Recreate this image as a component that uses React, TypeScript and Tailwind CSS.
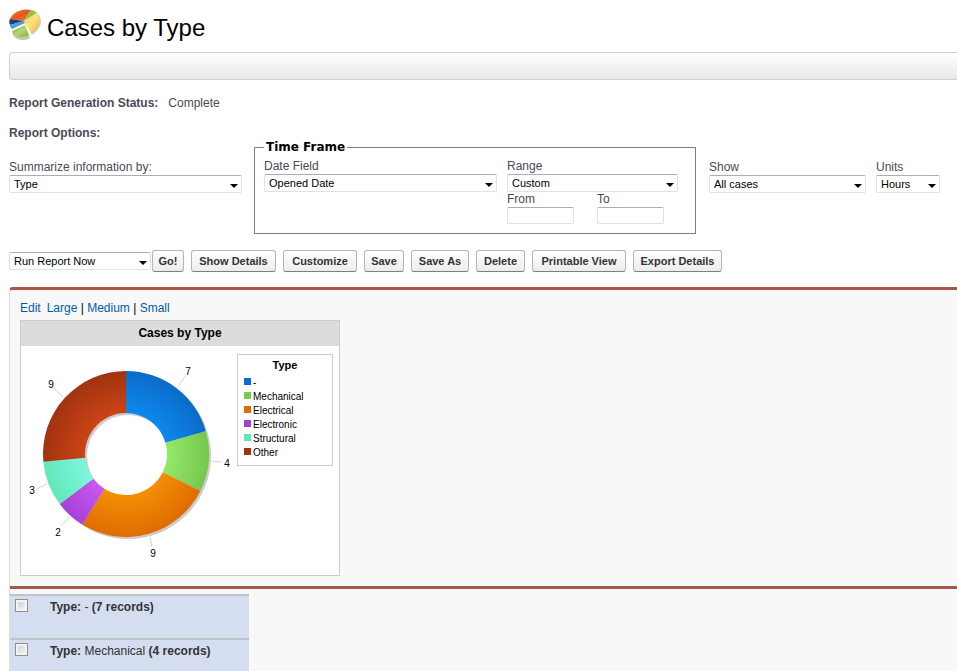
import { useId } from 'react';
import type { ReactNode } from 'react';

const slices = [
  { label: '-', value: 7, inner: '#0d8bf0', outer: '#0b6bc9', text: [167, 29], line: [157, 41, 164, 30] },
  { label: 'Mechanical', value: 4, inner: '#98ec6c', outer: '#77c74f', text: [206, 121], line: [189, 115, 201, 116] },
  { label: 'Electrical', value: 9, inner: '#f59207', outer: '#e06c00', text: [132, 211], line: [129, 191, 131, 201] },
  { label: 'Electronic', value: 2, inner: '#cf58f2', outer: '#a542da', text: [37, 190], line: [49, 171, 40, 180] },
  { label: 'Structural', value: 3, inner: '#7ff7e2', outer: '#62e8b8', text: [11, 148], line: [26, 138, 15, 143] },
  { label: 'Other', value: 9, inner: '#cf4516', outer: '#a13310', text: [30, 42], line: [42, 51, 33, 42] },
];

const CX = 105;
const CY = 108;
const OUTER = 83;
const INNER = 41;

const total = slices.reduce((sum, s) => sum + s.value, 0);

const point = (r: number, turn: number) => {
  const a = turn * Math.PI * 2;
  return `${(CX + r * Math.sin(a)).toFixed(2)} ${(CY - r * Math.cos(a)).toFixed(2)}`;
};

const slicePath = (index: number) => {
  const before = slices.slice(0, index).reduce((sum, s) => sum + s.value, 0);
  const from = before / total;
  const to = (before + slices[index].value) / total;
  return `M${point(OUTER, from)}A${OUTER} ${OUTER} 0 0 1 ${point(OUTER, to)}L${point(INNER, to)}A${INNER} ${INNER} 0 0 0 ${point(INNER, from)}Z`;
};

const ReportIcon = () => (
  <svg width="34" height="34" viewBox="0 0 34 34" aria-hidden="true">
    <defs>
      <linearGradient id="icon-orange" x1="0" y1="0" x2="1" y2="1">
        <stop offset="0" stopColor="#f4863f" />
        <stop offset="0.5" stopColor="#e2571c" />
        <stop offset="1" stopColor="#f08a4e" />
      </linearGradient>
      <linearGradient id="icon-yellow" x1="0" y1="0" x2="1" y2="1">
        <stop offset="0" stopColor="#ffd84a" />
        <stop offset="0.5" stopColor="#fbe27a" />
        <stop offset="1" stopColor="#eeb422" />
      </linearGradient>
      <linearGradient id="icon-green" x1="0" y1="0" x2="1" y2="1">
        <stop offset="0" stopColor="#74ab31" />
        <stop offset="0.5" stopColor="#b5d670" />
        <stop offset="1" stopColor="#7fb23a" />
      </linearGradient>
    </defs>
    <path d="M28 5C34 10 34 20 23 27L21 24C29 19 31 12 28 5Z" fill="#cfccbf" />
    <path d="M3 25C5 32 15 34 21 30L20 27C14 30 8 29 3 25Z" fill="#c2c6b2" />
    <path d="M15 13L1 11C4 4 13 0 22 2Z" fill="url(#icon-orange)" />
    <path d="M15 13L22 2C24 2 26 3 28 5Z" fill="#93c34c" />
    <path d="M15 13L28 5C32 10 32 18 22 25Z" fill="url(#icon-yellow)" />
    <path d="M15 13L1 11C0 13 0 15 1 17Z" fill="#1c3f86" />
    <path d="M15 13L1 17C1 19 2 20 3 21L16 15Z" fill="#4a9fd8" />
    <path d="M16 17L3 23C4 29 13 31 20 27Z" fill="url(#icon-green)" />
  </svg>
);

type SelectProps = { label?: string; ariaLabel?: string; value: string; width: string };

const SelectBox = ({ label, ariaLabel, value, width }: SelectProps) => {
  const id = useId();
  return (
    <div className={width}>
      {label && (
        <label htmlFor={id} className="block text-[12px] leading-[15px] text-[#4a4a56]">
          {label}
        </label>
      )}
      <div className="relative">
        <select
          id={id}
          aria-label={ariaLabel}
          className="block h-[18px] w-full appearance-none rounded-[2px] border border-[#dfe1e9] border-t-[#abadb3] bg-white px-1 text-[11px] leading-4 text-black"
        >
          <option>{value}</option>
        </select>
        <svg className="pointer-events-none absolute right-1 top-2" width="8" height="5" viewBox="0 0 8 5" aria-hidden="true">
          <path d="M0 1H8L4 5Z" fill="#000" />
        </svg>
      </div>
    </div>
  );
};

const DateInput = ({ label }: { label: string }) => {
  const id = useId();
  return (
    <div className="w-[67px]">
      <label htmlFor={id} className="block text-[12px] leading-[15px] text-[#4a4a56]">
        {label}
      </label>
      <input
        id={id}
        type="text"
        className="block h-[17px] w-full rounded-[2px] border border-[#dfe1e9] border-t-[#abadb3] bg-white px-1 text-[11px]"
      />
    </div>
  );
};

const Button = ({ children, width }: { children: ReactNode; width: string }) => (
  <button
    type="button"
    className={`h-[22px] rounded-[3px] border border-[#b5b5b5] border-b-[#7f7f7f] bg-linear-to-b from-white to-[#ececec] text-center text-[11px] font-bold whitespace-nowrap text-[#333] ${width}`}
  >
    {children}
  </button>
);

const DonutChart = () => (
  <svg width="216" height="229" viewBox="0 0 216 229" role="img" aria-label="Cases by Type">
    <defs>
      {slices.map((s, i) => (
        <radialGradient key={s.label} id={`slice-${i}`} gradientUnits="userSpaceOnUse" cx={CX} cy={CY} r={OUTER}>
          <stop offset="0.45" stopColor={s.inner} />
          <stop offset="1" stopColor={s.outer} />
        </radialGradient>
      ))}
    </defs>
    <circle cx={CX + 2} cy={CY + 2} r="62" fill="none" stroke="#ccc" strokeWidth="42" />
    {slices.map((s, i) => (
      <g key={s.label}>
        <path d={slicePath(i)} fill={`url(#slice-${i})`} />
        <line x1={s.line[0]} y1={s.line[1]} x2={s.line[2]} y2={s.line[3]} stroke="#d5d5d5" />
        <text x={s.text[0]} y={s.text[1]} textAnchor="middle" fontSize="10" fill="#000">
          {s.value}
        </text>
      </g>
    ))}
  </svg>
);

const swatches = ['bg-[#0b6bd0]', 'bg-[#78c950]', 'bg-[#e06c00]', 'bg-[#a63fda]', 'bg-[#64e8ba]', 'bg-[#a13310]'];

const ChartLegend = () => (
  <div className="mt-2 h-28 w-24 border border-[#ccc] pt-1">
    <h3 className="text-center text-[11px] leading-3 font-bold text-black">Type</h3>
    <ul className="mt-1 pl-1.5">
      {slices.map((s, i) => (
        <li key={s.label} className="flex h-3.5 items-start gap-0.5 text-[10px] leading-4 text-black">
          <span className={`mt-[3px] size-[7px] ${swatches[i]}`} />
          {s.label}
        </li>
      ))}
    </ul>
  </div>
);

const groups = [
  { name: '-', count: 7 },
  { name: 'Mechanical', count: 4 },
];

export default function App() {
  return (
    <div className="min-h-screen bg-white pl-[9px] font-['Liberation_Sans',Arial,sans-serif] text-[12px] text-[#4a4a56]">
      <header className="flex h-[52px] items-start gap-1 pt-2">
        <ReportIcon />
        <h1 className="pt-1 text-[24px] leading-8 text-black">Cases by Type</h1>
      </header>

      <div className="h-7 rounded-l-[4px] border border-r-0 border-[#d0d0d0] bg-linear-to-b from-white to-[#e8e8e8]" />

      <p className="mt-[15px] flex gap-2.5 leading-4">
        <strong>Report Generation Status:</strong>
        <span>Complete</span>
      </p>
      <h2 className="mt-3.5 leading-4 font-bold">Report Options:</h2>

      <div className="flex items-start">
        <div className="mt-[19px]">
          <SelectBox label="Summarize information by:" value="Type" width="w-[233px]" />
        </div>
        <fieldset className="ml-3 h-[93px] w-[442px] border border-[#7d7d82] px-[9px]">
          <legend className="px-0.5 font-['DejaVu_Sans',Verdana,sans-serif] text-[12px] leading-3 font-bold text-black">Time Frame</legend>
          <div className="mt-1.5 flex gap-2.5">
            <SelectBox label="Date Field" value="Opened Date" width="w-[233px]" />
            <div>
              <SelectBox label="Range" value="Custom" width="w-[171px]" />
              <div className="flex gap-[23px]">
                <DateInput label="From" />
                <DateInput label="To" />
              </div>
            </div>
          </div>
        </fieldset>
        <div className="mt-[19px] ml-[13px] flex gap-2.5">
          <SelectBox label="Show" value="All cases" width="w-[157px]" />
          <SelectBox label="Units" value="Hours" width="w-16" />
        </div>
      </div>

      <div className="mt-4 flex items-center">
        <SelectBox ariaLabel="Report action" value="Run Report Now" width="w-[142px]" />
        <div className="ml-px flex gap-[7px]">
          <Button width="w-8">Go!</Button>
          <Button width="w-[85px]">Show Details</Button>
          <Button width="w-[74px]">Customize</Button>
          <Button width="w-10">Save</Button>
          <Button width="w-[58px]">Save As</Button>
          <Button width="w-[49px]">Delete</Button>
          <Button width="w-[94px]">Printable View</Button>
          <Button width="w-[89px]">Export Details</Button>
        </div>
      </div>

      <main className="mt-[15px] rounded-tl-[4px] border-t-[3px] border-l border-t-[#a8554a] border-l-[#ddd] bg-[#f8f8f8]">
        <div className="border-b-[3px] border-[#a8554a] px-2.5 pt-2.5 pb-2.5">
          <nav className="h-5 text-[12px] leading-4 text-black">
            <a href="#edit" className="mr-1.5 text-[#015ba7]">Edit</a>
            <a href="#large" className="text-[#015ba7]">Large</a> | <a href="#medium" className="text-[#015ba7]">Medium</a> |{' '}
            <a href="#small" className="text-[#015ba7]">Small</a>
          </nav>
          <section className="w-80 border border-[#ccc] bg-white">
            <h2 className="h-[25px] bg-[#dcdcdc] text-center text-[12px] leading-6 font-bold text-black">Cases by Type</h2>
            <div className="flex items-start">
              <DonutChart />
              <ChartLegend />
            </div>
          </section>
        </div>

        <table className="mt-[5px] w-[239px] border-collapse bg-[#d5ddf1] text-[12px] text-[#333]">
          <tbody>
            {groups.map((g) => (
              <tr key={g.name} className="h-11 border-t-2 border-[#c0c4c8] align-top">
                <td className="w-10 pt-[3px] pl-[5px]">
                  <input
                    type="checkbox"
                    aria-label={`Type: ${g.name}`}
                    className="block size-[13px] appearance-none border border-[#8e8f8f] bg-linear-to-br from-[#c9ccd1] to-[#f8f8f8] shadow-[inset_0_0_0_2px_#f4f4f4]"
                  />
                </td>
                <td className="pt-[3px] leading-4">
                  <strong>Type:</strong> {g.name} <strong>({g.count} records)</strong>
                </td>
              </tr>
            ))}
          </tbody>
        </table>
      </main>
    </div>
  );
}
